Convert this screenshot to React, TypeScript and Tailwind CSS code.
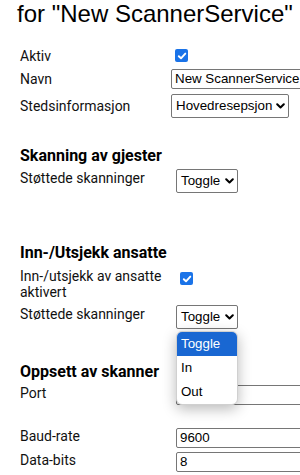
function Check({ className = "" }: { className?: string }) {
  return (
    <span className={`flex h-[13px] w-[13px] shrink-0 items-center justify-center rounded-[2px] bg-[#1a73e8] ${className}`}>
      <svg width="10" height="10" viewBox="0 0 10 10">
        <path d="M1.8 5.2 L4 7.3 L8.3 2.6" fill="none" stroke="white" strokeWidth="1.9" strokeLinecap="round" strokeLinejoin="round" />
      </svg>
    </span>
  );
}

function Select({ value, width }: { value: string; width: string }) {
  return (
    <div className={`flex h-[24px] ${width} shrink-0 items-center justify-between rounded-[2px] border border-[#767676] bg-white pl-[4px] pr-[3px] font-['Liberation_Sans',Arial,sans-serif] text-[13.33px] text-black`}>
      <span>{value}</span>
      <svg width="9" height="6" viewBox="0 0 9 6">
        <path d="M1.2 1.2 L4.5 4.5 L7.8 1.2" fill="none" stroke="black" strokeWidth="2" strokeLinecap="round" strokeLinejoin="round" />
      </svg>
    </div>
  );
}

function TextInput({ value }: { value: string }) {
  return (
    <div className="flex h-[20px] w-[150px] shrink-0 items-center overflow-hidden whitespace-nowrap rounded-[2px] border border-[#767676] bg-white px-[3px] font-['Liberation_Sans',Arial,sans-serif] text-[13.33px] leading-none text-black">
      {value}
    </div>
  );
}

export default function App() {
  return (
    <div className="relative h-[475px] w-[300px] overflow-hidden bg-white font-['Roboto',sans-serif] text-[14px] leading-[16px] text-[#111]">
      <h1 className="ml-[17px] whitespace-nowrap font-['Liberation_Sans',Arial,sans-serif] text-[24px] leading-[28px] text-black">
        for "New ScannerService"
      </h1>

      <div className="ml-[20px] mt-[18px] flex flex-col">
        <div className="flex h-[19px] items-center">
          <span className="w-[151px] shrink-0">Aktiv</span>
          <Check className="ml-[4px]" />
        </div>
        <div className="mt-[4px] flex h-[20px] items-center">
          <span className="w-[151px] shrink-0">Navn</span>
          <TextInput value="New ScannerService" />
        </div>
        <div className="mt-[5px] flex h-[24px] items-center">
          <span className="w-[151px] shrink-0">Stedsinformasjon</span>
          <Select value="Hovedresepsjon" width="w-[118px]" />
        </div>

        <h2 className="mt-[28px] text-[16px] font-bold leading-[19px] text-black">Skanning av gjester</h2>
        <div className="mt-[4px] flex items-start">
          <span className="w-[156px] shrink-0 pt-[1px]">Støttede skanninger</span>
          <Select value="Toggle" width="w-[62px]" />
        </div>

        <h2 className="mt-[50px] text-[16px] font-bold leading-[19px] text-black">Inn-/Utsjekk ansatte</h2>
        <div className="mt-[6px] flex items-start">
          <span className="w-[156px] shrink-0 pr-[12px]">Inn-/utsjekk av ansatte aktivert</span>
          <Check className="ml-[4px] mt-[4px]" />
        </div>
        <div className="relative mt-[5px] flex items-start">
          <span className="w-[156px] shrink-0 pt-[1px]">Støttede skanninger</span>
          <Select value="Toggle" width="w-[62px]" />
          <div className="absolute left-[156px] top-[26px] z-10 w-[62px] overflow-hidden rounded-[6px] border border-[#d0d0d0] bg-white font-['Liberation_Sans',Arial,sans-serif] text-[13.33px] text-black shadow-[0_4px_14px_rgba(0,0,0,0.28)]">
            <div className="flex h-[24px] items-center bg-[#1967d2] pl-[4px] text-white">Toggle</div>
            <div className="flex h-[24px] items-center pl-[4px]">In</div>
            <div className="flex h-[24px] items-center pl-[4px]">Out</div>
          </div>
        </div>

        <h2 className="mt-[33px] text-[16px] font-bold leading-[19px] text-black">Oppsett av skanner</h2>
        <div className="mt-[4px] flex h-[20px] items-start">
          <span className="w-[156px] shrink-0">Port</span>
          <TextInput value="" />
        </div>
        <div className="mt-[23px] flex h-[20px] items-start">
          <span className="w-[156px] shrink-0">Baud-rate</span>
          <TextInput value="9600" />
        </div>
        <div className="mt-[4px] flex h-[20px] items-start">
          <span className="w-[156px] shrink-0">Data-bits</span>
          <TextInput value="8" />
        </div>
      </div>
    </div>
  );
}
